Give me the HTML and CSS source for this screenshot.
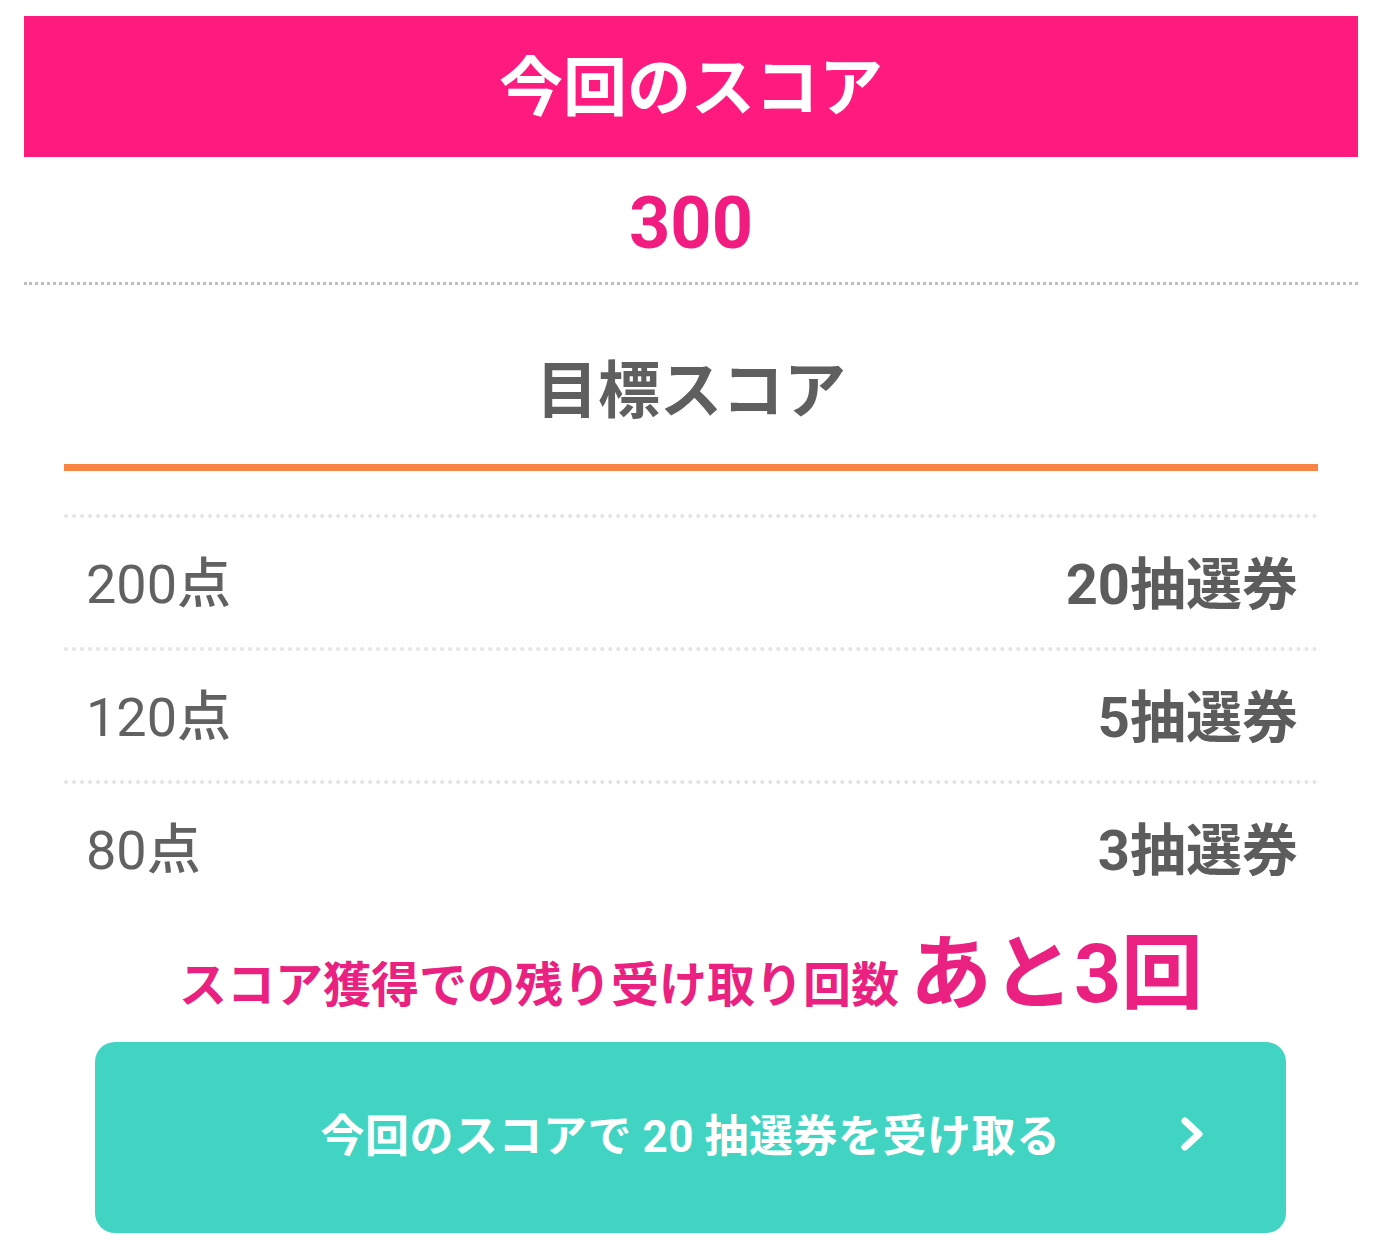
FILE: index.html
```html
<!DOCTYPE html>
<html lang="ja">
<head>
<meta charset="utf-8">
<title>今回のスコア</title>
<link rel="stylesheet" href="styles.css">
</head>
<body>
<div class="page">
  <div class="score-head">今回のスコア</div>
  <div class="score-value">300</div>
  <div class="target">
    <h2 class="target-title">目標スコア</h2>
    <ul class="target-list">
      <li class="target-row"><span class="pts">200<span class="jp">点</span></span><span class="reward">20<span class="jp">抽選券</span></span></li>
      <li class="target-row"><span class="pts">120<span class="jp">点</span></span><span class="reward">5<span class="jp">抽選券</span></span></li>
      <li class="target-row"><span class="pts">80<span class="jp">点</span></span><span class="reward">3<span class="jp">抽選券</span></span></li>
    </ul>
  </div>
  <p class="remain">スコア獲得での残り受け取り回数 <span class="remain-big">あと<span class="num">3</span>回</span></p>
  <a class="receive-btn" href="#">
    <span class="btn-label">今回のスコアで <span class="num">20</span> 抽選券を受け取る</span>
    <svg class="chev" width="32" height="38" viewBox="0 0 32 38"><polyline points="8,6 22,19 8,32" fill="none" stroke="#fff" stroke-width="7" stroke-linecap="round" stroke-linejoin="round"/></svg>
  </a>
</div>
</body>
</html>
```

FILE: styles.css
```css
* { box-sizing: border-box; }
html, body { margin: 0; padding: 0; background: #fff; }
body {
  font-family: "Noto Sans CJK JP", "Noto Sans", sans-serif;
  color: #5f5f5f;
}
.page {
  padding: 16px 23px 0 24px;
}
.score-head {
  height: 141px;
  background: #ff1a80;
  color: #fff;
  font-weight: 700;
  font-size: 64px;
  line-height: 133px;
  text-align: center;
  letter-spacing: 0;
}
.score-value {
  height: 128px;
  line-height: 134px;
  text-align: center;
  font-family: Roboto, "Noto Sans CJK JP", sans-serif;
  font-weight: 700;
  font-size: 72px;
  color: #f21c80;
  border-bottom: 3px dotted #bdbdbd;
}
.target {
  margin: 0 40px;
}
.target-title {
  margin: 0;
  padding-top: 58px;
  height: 186px;
  font-size: 62px;
  line-height: 86px;
  font-weight: 700;
  text-align: center;
  color: #5f5f5f;
  border-bottom: 7px solid #f98545;
}
.target-list {
  list-style: none;
  margin: 0;
  padding: 0;
  padding-top: 43px;
}
.target-row {
  display: flex;
  justify-content: space-between;
  align-items: center;
  height: 133px;
  padding: 0 20px 6px 22px;
  border-top: 4px dotted #e4e4e4;
  font-size: 54px;
}
.pts {
  font-family: Roboto, "Noto Sans CJK JP", sans-serif;
  font-weight: 400;
  color: #616161;
}
.pts .jp { font-family: "Noto Sans CJK JP", sans-serif; font-weight: 500; font-size: 54px; }
.reward {
  font-family: Roboto, "Noto Sans CJK JP", sans-serif;
  font-weight: 700;
  font-size: 56px;
  color: #5c5c5c;
}
.reward .jp { font-family: "Noto Sans CJK JP", sans-serif; font-weight: 700; font-size: 56px; }
.remain {
  margin: 11px 0 0;
  height: 118px;
  text-align: center;
  color: #ea2180;
  font-weight: 700;
  font-size: 48px;
  line-height: 86px;
  letter-spacing: 0;
  white-space: nowrap;
}
.remain-big {
  font-size: 82px;
  letter-spacing: 0;
}
.remain-big .num, .btn-label .num {
  font-family: Roboto, sans-serif;
}
.receive-btn {
  position: relative;
  display: flex;
  align-items: center;
  justify-content: center;
  margin: 0 72px 0 71px;
  padding-bottom: 9px;
  height: 191px;
  background: #42d4c2;
  border-radius: 20px;
  text-decoration: none;
  color: #fff;
}
.btn-label {
  font-weight: 700;
  font-size: 44px;
  letter-spacing: 0.5px;
}
.chev {
  position: absolute;
  right: 77px;
  top: 73px;
}
```
